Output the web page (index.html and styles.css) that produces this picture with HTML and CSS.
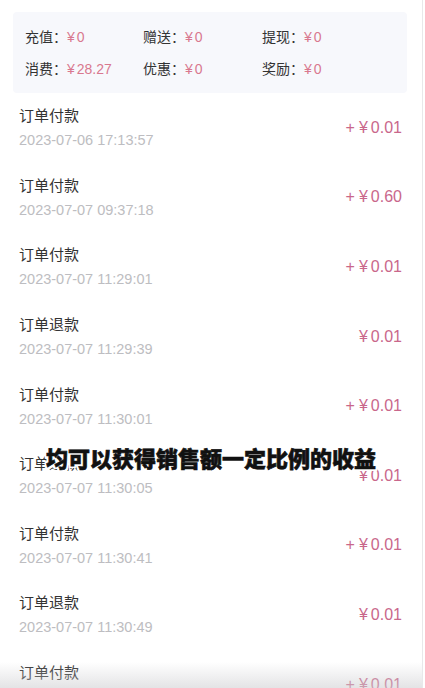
FILE: index.html
```html
<!DOCTYPE html>
<html>
<head>
<meta name="viewport" content="width=device-width, initial-scale=1">
<link rel="stylesheet" href="styles.css">
</head>
<body>

<div class="page">
  <div class="summary">
    <div class="stat"><span class="stat-label">充值：</span><span class="stat-value"><span class="yen">¥</span>0</span></div>
    <div class="stat"><span class="stat-label">赠送：</span><span class="stat-value"><span class="yen">¥</span>0</span></div>
    <div class="stat"><span class="stat-label">提现：</span><span class="stat-value"><span class="yen">¥</span>0</span></div>
    <div class="stat"><span class="stat-label">消费：</span><span class="stat-value"><span class="yen">¥</span>28.27</span></div>
    <div class="stat"><span class="stat-label">优惠：</span><span class="stat-value"><span class="yen">¥</span>0</span></div>
    <div class="stat"><span class="stat-label">奖励：</span><span class="stat-value"><span class="yen">¥</span>0</span></div>
  </div>

  <ul class="records">
    <li class="record">
      <div class="record-info"><div class="record-title">订单付款</div><div class="record-time">2023-07-06 17:13:57</div></div>
      <div class="record-amount">+<span class="yen">¥</span>0.01</div>
    </li>
    <li class="record">
      <div class="record-info"><div class="record-title">订单付款</div><div class="record-time">2023-07-07 09:37:18</div></div>
      <div class="record-amount">+<span class="yen">¥</span>0.60</div>
    </li>
    <li class="record">
      <div class="record-info"><div class="record-title">订单付款</div><div class="record-time">2023-07-07 11:29:01</div></div>
      <div class="record-amount">+<span class="yen">¥</span>0.01</div>
    </li>
    <li class="record">
      <div class="record-info"><div class="record-title">订单退款</div><div class="record-time">2023-07-07 11:29:39</div></div>
      <div class="record-amount"><span class="yen">¥</span>0.01</div>
    </li>
    <li class="record">
      <div class="record-info"><div class="record-title">订单付款</div><div class="record-time">2023-07-07 11:30:01</div></div>
      <div class="record-amount">+<span class="yen">¥</span>0.01</div>
    </li>
    <li class="record">
      <div class="record-info"><div class="record-title">订单退款</div><div class="record-time">2023-07-07 11:30:05</div></div>
      <div class="record-amount"><span class="yen">¥</span>0.01</div>
    </li>
    <li class="record">
      <div class="record-info"><div class="record-title">订单付款</div><div class="record-time">2023-07-07 11:30:41</div></div>
      <div class="record-amount">+<span class="yen">¥</span>0.01</div>
    </li>
    <li class="record">
      <div class="record-info"><div class="record-title">订单退款</div><div class="record-time">2023-07-07 11:30:49</div></div>
      <div class="record-amount"><span class="yen">¥</span>0.01</div>
    </li>
    <li class="record">
      <div class="record-info"><div class="record-title">订单付款</div><div class="record-time">2023-07-07 11:31:02</div></div>
      <div class="record-amount">+<span class="yen">¥</span>0.01</div>
    </li>
  </ul>

  <div class="caption">均可以获得销售额一定比例的收益</div>
  <div class="bottom-fade"></div>
</div>

</body>
</html>
```

FILE: styles.css
```css
html, body {
  margin: 0;
  padding: 0;
  height: 100%;
  overflow: hidden;
}

body {
  font-family: "Noto Sans CJK SC", "Noto Sans", sans-serif;
  background-color: #fff;
}

.page {
  position: relative;
  width: 422px;
  height: 688px;
  border-right: 1px solid #e8e8ea;
  overflow: hidden;
}

.summary {
  margin: 12px 15px 0 13px;
  height: 81px;
  padding: 0 12px;
  box-sizing: border-box;
  background-color: #f7f8fc;
  border-radius: 4px;
  display: grid;
  grid-template-columns: 118px 119px 1fr;
  align-content: center;
  row-gap: 9px;
}

.stat {
  font-size: 14px;
  line-height: 22px;
  white-space: nowrap;
}

.stat-label {
  color: #333;
}

.stat-value {
  color: #d9788f;
  font-family: "Liberation Sans", "Noto Sans CJK SC", sans-serif;
}

.stat-value .yen {
  margin-right: 2px;
}

.records {
  list-style: none;
  margin: 0;
  padding: 0 20px 0 19px;
}

.record {
  height: 69.6px;
  display: flex;
  align-items: center;
  justify-content: space-between;
}

.record-info {
  display: flex;
  flex-direction: column;
  gap: 3px;
}

.record-title {
  font-size: 15px;
  line-height: 22px;
  color: #333;
}

.record-time {
  font-family: "Liberation Sans", sans-serif;
  font-size: 14.5px;
  line-height: 22px;
  color: #bdbdc1;
}

.record-amount {
  font-family: "Liberation Sans", "Noto Sans CJK SC", sans-serif;
  font-size: 16px;
  color: #c9678b;
}

.record-amount .yen {
  margin: 0 3px 0 4px;
}

.caption {
  position: absolute;
  left: 0;
  right: 0;
  top: 441px;
  text-align: center;
  font-size: 22px;
  font-weight: 900;
  color: #111;
  -webkit-text-stroke: 0.6px #111;
  text-shadow: 0 0 2px #fff, 2px 2px 0 #fff, -2px -2px 0 #fff, 2px -2px 0 #fff, -2px 2px 0 #fff, 0 2px 0 #fff, 0 -2px 0 #fff, 2px 0 0 #fff, -2px 0 0 #fff;
}

.bottom-fade {
  position: absolute;
  left: 0;
  right: 0;
  bottom: 0;
  height: 26px;
  background: linear-gradient(to bottom, rgba(210, 210, 212, 0), rgba(205, 205, 208, 0.55));
}
```
